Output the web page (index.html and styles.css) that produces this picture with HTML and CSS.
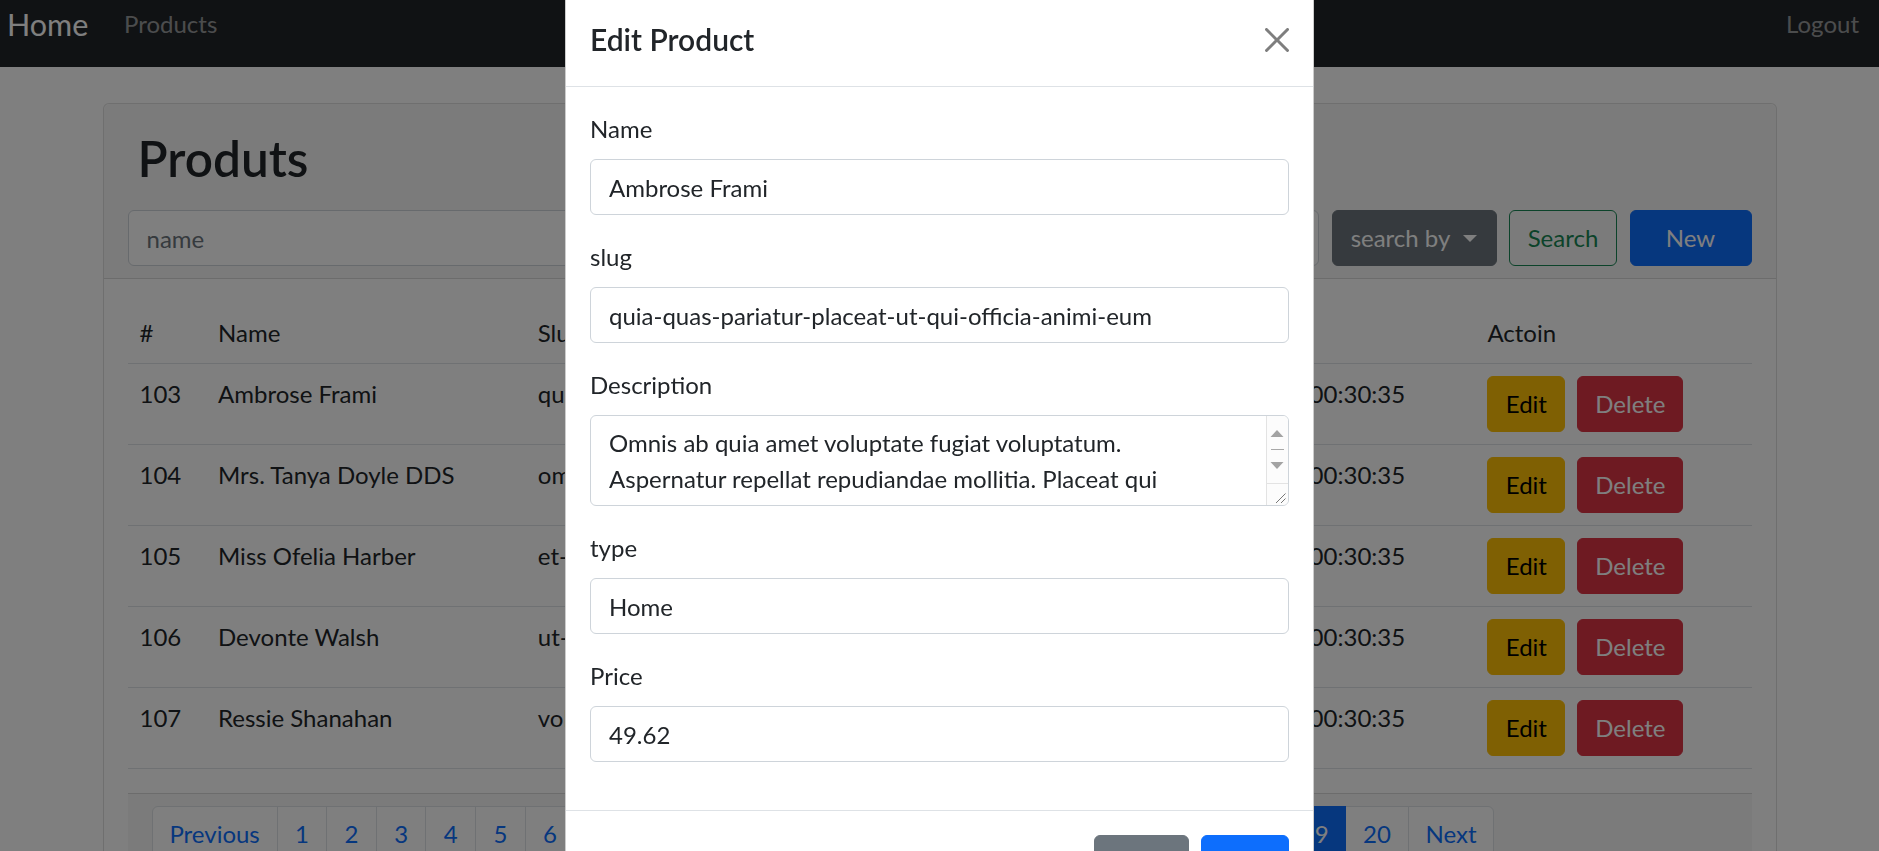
FILE: index.html
```html
<!DOCTYPE html>
<html lang="en">
<head>
<meta charset="utf-8">
<title>Products</title>
<link rel="stylesheet" href="styles.css">
</head>
<body>
<nav class="navbar">
  <div class="nav-row">
    <a class="brand" href="#">Home</a>
    <a class="nav-link" href="#">Products</a>
    <a class="nav-link nav-right" href="#">Logout</a>
  </div>
</nav>

<main class="container">
  <section class="card">
    <header class="card-header">
      <h1 class="page-title">Produts</h1>
      <form class="search-row">
        <input class="form-control search-input" type="text" placeholder="name">
        <button type="button" class="btn btn-secondary btn-dropdown">search by<span class="caret"></span></button>
        <button type="button" class="btn btn-outline-success btn-search">Search</button>
        <button type="button" class="btn btn-primary btn-new">New</button>
      </form>
    </header>
    <div class="card-body">
      <table class="table">
        <colgroup>
          <col class="col-id"><col class="col-name"><col class="col-slug"><col class="col-type"><col class="col-price"><col class="col-date"><col class="col-action">
        </colgroup>
        <thead>
          <tr><th>#</th><th>Name</th><th>Slug</th><th>Type</th><th>Price</th><th>Updated at</th><th>Actoin</th></tr>
        </thead>
        <tbody>
          <tr><td>103</td><td>Ambrose Frami</td><td>quia-quas-pariatur-placeat-ut-qui-officia-animi-eum</td><td>Home</td><td>49.62</td><td>2021-10-22 00:30:35</td><td><div class="actions"><button class="btn btn-warning btn-edit">Edit</button><button class="btn btn-danger btn-delete">Delete</button></div></td></tr>
          <tr><td>104</td><td>Mrs. Tanya Doyle DDS</td><td>omnis-sed-est-nesciunt-aut</td><td>Home</td><td>12.40</td><td>2021-10-22 00:30:35</td><td><div class="actions"><button class="btn btn-warning btn-edit">Edit</button><button class="btn btn-danger btn-delete">Delete</button></div></td></tr>
          <tr><td>105</td><td>Miss Ofelia Harber</td><td>et-aut-voluptas-dolorem</td><td>Home</td><td>73.15</td><td>2021-10-22 00:30:35</td><td><div class="actions"><button class="btn btn-warning btn-edit">Edit</button><button class="btn btn-danger btn-delete">Delete</button></div></td></tr>
          <tr><td>106</td><td>Devonte Walsh</td><td>ut-quia-rerum-molestiae</td><td>Home</td><td>28.90</td><td>2021-10-22 00:30:35</td><td><div class="actions"><button class="btn btn-warning btn-edit">Edit</button><button class="btn btn-danger btn-delete">Delete</button></div></td></tr>
          <tr><td>107</td><td>Ressie Shanahan</td><td>voluptatem-ipsa-odit-qui</td><td>Home</td><td>61.07</td><td>2021-10-22 00:30:35</td><td><div class="actions"><button class="btn btn-warning btn-edit">Edit</button><button class="btn btn-danger btn-delete">Delete</button></div></td></tr>
        </tbody>
      </table>
      <div class="table-footer">
        <ul class="pagination">
          <li class="page-item"><a class="page-link w-prev" href="#">Previous</a></li>
          <li class="page-item"><a class="page-link w-1" href="#">1</a></li>
          <li class="page-item"><a class="page-link w-1" href="#">2</a></li>
          <li class="page-item"><a class="page-link w-1" href="#">3</a></li>
          <li class="page-item"><a class="page-link w-1" href="#">4</a></li>
          <li class="page-item"><a class="page-link w-1" href="#">5</a></li>
          <li class="page-item"><a class="page-link w-1" href="#">6</a></li>
          <li class="page-item"><a class="page-link w-1" href="#">7</a></li>
          <li class="page-item"><a class="page-link w-1" href="#">8</a></li>
          <li class="page-item"><a class="page-link w-1" href="#">9</a></li>
          <li class="page-item"><a class="page-link w-2" href="#">10</a></li>
          <li class="page-item"><a class="page-link w-2" href="#">11</a></li>
          <li class="page-item"><a class="page-link w-2" href="#">12</a></li>
          <li class="page-item"><a class="page-link w-2" href="#">13</a></li>
          <li class="page-item"><a class="page-link w-2" href="#">14</a></li>
          <li class="page-item"><a class="page-link w-2" href="#">15</a></li>
          <li class="page-item"><a class="page-link w-2" href="#">16</a></li>
          <li class="page-item"><a class="page-link w-2" href="#">17</a></li>
          <li class="page-item"><a class="page-link w-2" href="#">18</a></li>
          <li class="page-item active"><a class="page-link w-2" href="#">19</a></li>
          <li class="page-item"><a class="page-link w-2" href="#">20</a></li>
          <li class="page-item"><a class="page-link w-next" href="#">Next</a></li>
        </ul>
      </div>
    </div>
  </section>
</main>

<div class="backdrop"></div>

<div class="modal">
  <div class="modal-dialog">
    <div class="modal-content">
      <div class="modal-header">
        <h5 class="modal-title">Edit Product</h5>
        <button type="button" class="btn-close" aria-label="Close">
          <svg width="24" height="24" viewBox="0 0 16 16" aria-hidden="true"><path d="M.293.293a1 1 0 011.414 0L8 6.586 14.293.293a1 1 0 111.414 1.414L9.414 8l6.293 6.293a1 1 0 01-1.414 1.414L8 9.414l-6.293 6.293a1 1 0 01-1.414-1.414L6.586 8 .293 1.707a1 1 0 010-1.414z"/></svg>
        </button>
      </div>
      <div class="modal-body">
        <div class="field">
          <label class="form-label">Name</label>
          <input class="form-control" type="text" value="Ambrose Frami">
        </div>
        <div class="field">
          <label class="form-label">slug</label>
          <input class="form-control" type="text" value="quia-quas-pariatur-placeat-ut-qui-officia-animi-eum">
        </div>
        <div class="field">
          <label class="form-label">Description</label>
          <div class="textarea-wrap">
            <textarea class="form-control textarea">Omnis ab quia amet voluptate fugiat voluptatum.
Aspernatur repellat repudiandae mollitia. Placeat qui
exercitationem sint et.</textarea>
            <svg class="fake-scrollbar" width="22" height="89" viewBox="0 0 22 89" aria-hidden="true">
              <rect x="0" y="0" width="22" height="89" fill="#fcfcfc"/>
              <line x1="0.5" y1="0" x2="0.5" y2="89" stroke="#e3e3e3" stroke-width="1"/>
              <path d="M4.5 21 L11 14 L17.5 21 Z" fill="#a3a3a3"/>
              <line x1="5" y1="33.5" x2="18" y2="33.5" stroke="#a8a8a8" stroke-width="1"/>
              <path d="M4.5 46 L17.5 46 L11 53 Z" fill="#a3a3a3"/>
              <line x1="0" y1="67.5" x2="22" y2="67.5" stroke="#e3e3e3" stroke-width="1"/>
              <line x1="10" y1="87" x2="19.5" y2="77.5" stroke="#777" stroke-width="1"/>
              <line x1="15" y1="87" x2="19.5" y2="82.5" stroke="#777" stroke-width="1"/>
            </svg>
          </div>
        </div>
        <div class="field">
          <label class="form-label">type</label>
          <input class="form-control" type="text" value="Home">
        </div>
        <div class="field">
          <label class="form-label">Price</label>
          <input class="form-control" type="text" value="49.62">
        </div>
      </div>
      <div class="modal-footer">
        <button type="button" class="btn btn-secondary btn-cancel">Close</button>
        <button type="button" class="btn btn-primary btn-save">Save</button>
      </div>
    </div>
  </div>
</div>
</body>
</html>
```

FILE: styles.css
```css
* { box-sizing: border-box; }

html, body {
  margin: 0;
  height: 100%;
  overflow: hidden;
}

body {
  font-family: Lato, "Liberation Sans", Arial, sans-serif;
  font-size: 24px;
  line-height: 36px;
  color: #212529;
  background: #fff;
}

a { text-decoration: none; }

/* Navbar */
.navbar {
  height: 67px;
  background: #212529;
  padding: 0 8px 0 7px;
}
.nav-row {
  display: flex;
  align-items: center;
  height: 48px;
}
.brand {
  width: 81px;
  margin-right: 24px;
  font-size: 30.5px;
  line-height: 45px;
  color: #fff;
}
.nav-link {
  padding: 0 12px;
  color: rgba(255, 255, 255, .55);
}
.nav-right { margin-left: auto; }

/* Card */
.container {
  max-width: 1710px;
  margin: 36px auto 0;
  padding: 0 18px;
}
.card {
  background: #fff;
  border: 1px solid rgba(0, 0, 0, .125);
  border-radius: 6px;
}
.card-header {
  padding: 12px 24px;
  background: rgba(0, 0, 0, .03);
  border-bottom: 1px solid rgba(0, 0, 0, .125);
  border-radius: 6px 6px 0 0;
}
.page-title {
  margin: 13.6px 0 23px 10px;
  font-size: 49.5px;
  line-height: 57.6px;
  font-weight: 600;
}
.search-row {
  display: flex;
  gap: 12.5px;
  margin: 0;
}

/* Form controls */
.form-control {
  display: block;
  width: 100%;
  height: 56px;
  margin: 0;
  padding: 9px 18px;
  font: inherit;
  color: #212529;
  background: #fff;
  border: 1px solid #ced4da;
  border-radius: 6px;
  outline: none;
}
.form-control::placeholder { color: #6c757d; }
.search-input {
  flex: 1;
  width: auto;
  min-width: 0;
}

/* Buttons */
.btn {
  display: inline-flex;
  align-items: center;
  justify-content: center;
  height: 56px;
  margin: 0;
  padding: 9px 18px;
  font: inherit;
  border: 1px solid transparent;
  border-radius: 6px;
  background: transparent;
  white-space: nowrap;
}
.btn-secondary { background: #6c757d; border-color: #6c757d; color: #fff; }
.btn-primary { background: #0d6efd; border-color: #0d6efd; color: #fff; }
.btn-outline-success { border-color: #198754; color: #198754; }
.btn-warning { background: #ffc107; border-color: #ffc107; color: #000; }
.btn-danger { background: #dc3545; border-color: #dc3545; color: #fff; }

.btn-dropdown { width: 165px; padding: 9px 0; }
.btn-search { width: 108px; padding: 9px 0; }
.btn-new { width: 122px; padding: 9px 0; }
.btn-edit { width: 78px; padding: 9px 0; }
.btn-delete { width: 106px; padding: 9px 0; }
.btn-cancel { width: 95px; padding: 9px 0; }
.btn-save { width: 88px; padding: 9px 0; }

.caret {
  display: inline-block;
  margin-left: 13px;
  border-top: 7px solid currentColor;
  border-left: 7px solid transparent;
  border-right: 7px solid transparent;
}

/* Table */
.card-body { padding: 24px; }
.table {
  width: 100%;
  table-layout: fixed;
  border-collapse: collapse;
  margin-bottom: 24px;
}
.table th,
.table td {
  padding: 12px;
  text-align: left;
  vertical-align: top;
  font-weight: 400;
  border-bottom: 1px solid #dee2e6;
  white-space: nowrap;
  overflow: hidden;
}
.col-id { width: 78.5px; }
.col-name { width: 319.7px; }
.col-slug { width: 400px; }
.col-type { width: 114.3px; }
.col-price { width: 122px; }
.col-date { width: 313px; }
.col-action { width: 276px; }

.actions {
  display: flex;
  gap: 12px;
}

/* Pagination */
.table-footer {
  padding: 12px 24px;
  background: rgba(0, 0, 0, .03);
  border-top: 1px solid rgba(0, 0, 0, .125);
}
.pagination {
  display: flex;
  list-style: none;
  margin: 0;
  padding: 0;
}
.page-link {
  display: block;
  margin-left: -1px;
  padding: 9px 0;
  text-align: center;
  color: #0d6efd;
  background: #fff;
  border: 1px solid #dee2e6;
}
.page-item:first-child .page-link {
  margin-left: 0;
  border-radius: 6px 0 0 6px;
}
.page-item:last-child .page-link { border-radius: 0 6px 6px 0; }
.page-item.active .page-link {
  position: relative;
  background: #0d6efd;
  border-color: #0d6efd;
  color: #fff;
}
.w-prev { width: 126.2px; }
.w-1 { width: 50.6px; }
.w-2 { width: 63.24px; }
.w-next { width: 86.8px; }

/* Modal */
.backdrop {
  position: fixed;
  inset: 0;
  background: rgba(0, 0, 0, .5);
  z-index: 1040;
}
.modal {
  position: fixed;
  inset: 0;
  overflow: hidden;
  z-index: 1050;
}
.modal-dialog {
  width: 749px;
  margin: -8px auto 0;
}
.modal-content {
  background: #fff;
  border: 1px solid rgba(0, 0, 0, .2);
  border-radius: 7px;
}
.modal-header {
  display: flex;
  align-items: center;
  padding: 24px;
  border-bottom: 1px solid #dee2e6;
}
.modal-title {
  margin: 0;
  font-size: 30px;
  line-height: 45px;
  font-weight: 600;
}
.btn-close {
  width: 36px;
  height: 36px;
  margin: -6px -6px -6px auto;
  padding: 6px;
  border: 0;
  background: transparent;
  opacity: .5;
}
.btn-close svg {
  display: block;
  fill: #000;
}
.modal-body { padding: 24px; }
.field { margin-bottom: 24px; }
.form-label {
  display: block;
  margin-bottom: 12px;
}
.textarea-wrap { position: relative; }
.textarea {
  height: 91px;
  padding-right: 40px;
  resize: none;
  overflow: hidden;
}
.fake-scrollbar {
  position: absolute;
  top: 1px;
  right: 1px;
  border-radius: 0 5px 5px 0;
}
.modal-footer {
  display: flex;
  justify-content: flex-end;
  padding: 18px;
  border-top: 1px solid #dee2e6;
}
.modal-footer .btn { margin: 6px; }
```
